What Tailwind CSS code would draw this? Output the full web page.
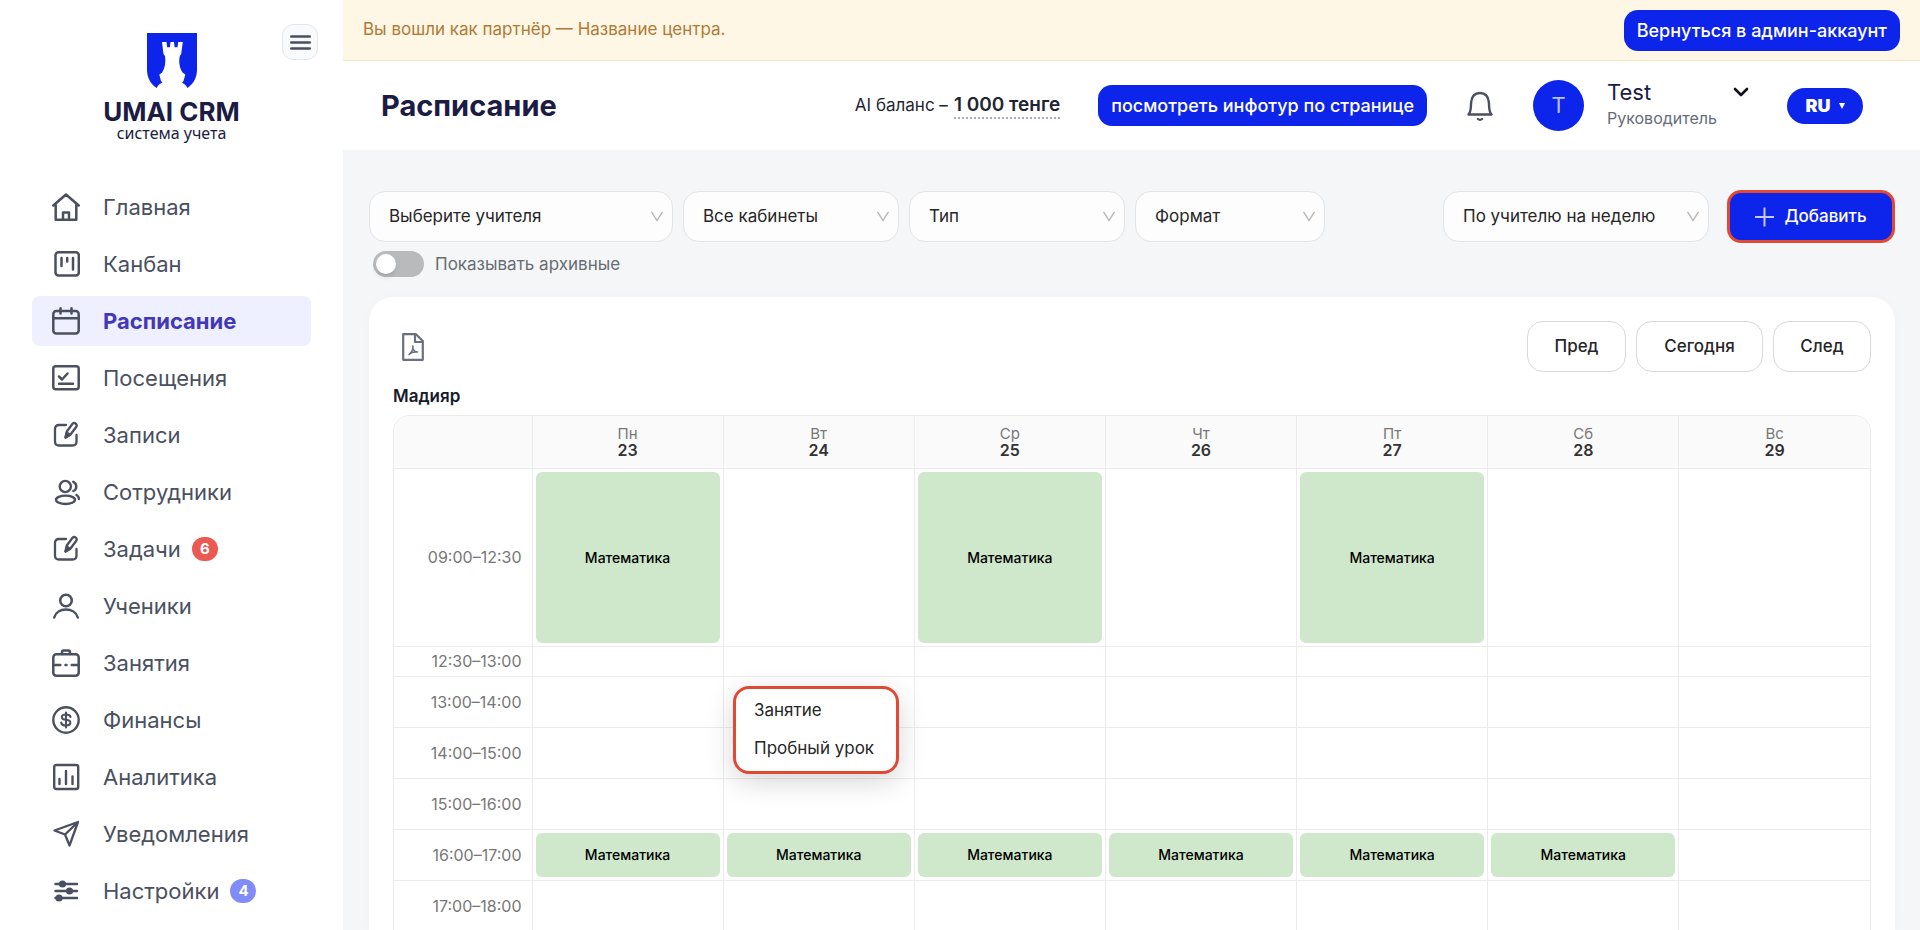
<!DOCTYPE html>
<html lang="ru">
<head>
<meta charset="utf-8">
<title>Расписание — UMAI CRM</title>
<script src="https://cdn.jsdelivr.net/npm/@tailwindcss/browser@4"></script>
</head>
<body class="font-['Inter',sans-serif] bg-[#f4f6f8] text-[#262626] h-screen overflow-hidden">
<div class="flex h-full">

<!-- Sidebar -->
<aside class="relative w-[343px] shrink-0 bg-white">
  <button type="button" aria-label="Меню" class="absolute top-6 right-[25px] size-9 rounded-[11px] border border-[#e5e7eb] bg-[#f8fafc] flex items-center justify-center text-[#4a5060]">
    <svg class="w-[21px] h-[17px]" viewBox="0 0 21 17" fill="none" stroke="currentColor" stroke-width="2.400" stroke-linecap="round"><path d="M1.200 2.500h18.600M1.200 8.500h18.600M1.200 14.500h18.600"/></svg>
  </button>
  <div class="pt-[33px] flex flex-col items-center text-[#1b1b44]">
    <svg class="w-[50px] h-[55px]" viewBox="0 0 50 55" aria-hidden="true"><path fill="#0d24ea" d="M0 0H50V37C50 44 46.500 51 40.500 55L38.500 52 35 49.500 36.500 48 38.300 41.500 35.800 39.800C32.500 35 31.500 29 32.800 23L34.200 21 35.800 9H31.200L30.500 14.200H27.600L27 9H23.500L22.900 14.200H20.200L19.500 9H15L16.500 21 18 23C19 29 18 35 15 39.800L12.300 41.500 14 48 15.500 49.500 12 51.500 9.500 55C3.500 51 0 44 0 37Z"/></svg>
    <div class="mt-[11px] font-bold text-[26px] leading-[26px]">UMAI CRM</div>
    <div class="font-['Noto_Sans',sans-serif] text-[16px] leading-4">система учета</div>
  </div>
  <nav class="mt-[41px] px-8 flex flex-col gap-[7px] text-[22px] text-[#4a5060]">
    <a href="#" class="h-[50px] flex items-center gap-[23px] pl-5 rounded-lg">
      <svg class="size-7" viewBox="0 0 28 28" fill="none" stroke="currentColor" stroke-width="2.500" stroke-linecap="round" stroke-linejoin="round"><path d="M1.300 12.500 14 1.500 26.700 12.500M3.700 10.800V26.700H24.300V10.800M11 26.500V19.500H17V26.500"/></svg>Главная</a>
    <a href="#" class="h-[50px] flex items-center gap-[23px] pl-5 rounded-lg">
      <svg class="size-7" viewBox="0 0 28 28" fill="none" stroke="currentColor" stroke-width="2.500" stroke-linecap="round" stroke-linejoin="round"><rect x="3.500" y="2.200" width="23.300" height="23.300" rx="3"/><path d="M9.500 8v8M15.200 8v3.500M21 8v11.500"/></svg>Канбан</a>
    <a href="#" aria-current="page" class="h-[50px] flex items-center gap-[23px] pl-5 rounded-lg bg-[#eeefff]">
      <svg class="size-7" viewBox="0 0 28 28" fill="none" stroke="currentColor" stroke-width="2.500" stroke-linecap="round" stroke-linejoin="round"><rect x="1.300" y="4" width="25.400" height="22.500" rx="3"/><path d="M1.300 11.200H26.700M8.500 1.300V6.500M19.500 1.300V6.500"/></svg><span class="font-bold text-[#4338b8]">Расписание</span></a>
    <a href="#" class="h-[50px] flex items-center gap-[23px] pl-5 rounded-lg">
      <svg class="size-7" viewBox="0 0 28 28" fill="none" stroke="currentColor" stroke-width="2.500" stroke-linecap="round" stroke-linejoin="round"><rect x="1.300" y="2.200" width="25.400" height="23" rx="2.500"/><path d="M7 12.500 10 15.500 15.500 9.500M7 19.800H21"/></svg>Посещения</a>
    <a href="#" class="h-[50px] flex items-center gap-[23px] pl-5 rounded-lg">
      <svg class="size-7" viewBox="0 0 28 28" fill="none" stroke="currentColor" stroke-width="2.300" stroke-linecap="round" stroke-linejoin="round"><path d="M14 4H7Q3 4 3 8V20.500Q3 24.500 7 24.500H20.500Q24.500 24.500 24.500 20.500V14"/><path d="M13.500 16.500 14.800 10.500 20.500 2.800Q22 1.300 23.800 2.600 25.300 4 24.300 5.800L18.500 13.500Z"/><path fill="currentColor" d="M13.500 16.500 14.800 11.500 18 14Z"/></svg>Записи</a>
    <a href="#" class="h-[50px] flex items-center gap-[23px] pl-5 rounded-lg">
      <svg class="size-7" viewBox="0 0 28 28" fill="none" stroke="currentColor" stroke-width="2.400" stroke-linecap="round"><circle cx="13.300" cy="8.500" r="5.600"/><ellipse cx="13.500" cy="21.800" rx="9.500" ry="4.200"/><path d="M21.300 3.800C25.300 5.500 25.300 11.500 21.300 13M24.500 17C26 17.800 27 19.300 26.800 21"/></svg>Сотрудники</a>
    <a href="#" class="h-[50px] flex items-center gap-[23px] pl-5 rounded-lg">
      <svg class="size-7" viewBox="0 0 28 28" fill="none" stroke="currentColor" stroke-width="2.300" stroke-linecap="round" stroke-linejoin="round"><path d="M14 4H7Q3 4 3 8V20.500Q3 24.500 7 24.500H20.500Q24.500 24.500 24.500 20.500V14"/><path d="M13.500 16.500 14.800 10.500 20.500 2.800Q22 1.300 23.800 2.600 25.300 4 24.300 5.800L18.500 13.500Z"/><path fill="currentColor" d="M13.500 16.500 14.800 11.500 18 14Z"/></svg><span class="flex items-center gap-[11px]">Задачи<span class="h-6 min-w-[26px] rounded-full bg-[#eb5a52] text-white text-[15px] font-bold flex items-center justify-center">6</span></span></a>
    <a href="#" class="h-[50px] flex items-center gap-[23px] pl-5 rounded-lg">
      <svg class="size-7" viewBox="0 0 28 28" fill="none" stroke="currentColor" stroke-width="2.500" stroke-linecap="round"><circle cx="14" cy="8.500" r="5.800"/><path d="M2.200 25.500C5 14.800 23 14.800 25.800 25.500"/></svg>Ученики</a>
    <a href="#" class="h-[50px] flex items-center gap-[23px] pl-5 rounded-lg">
      <svg class="size-7" viewBox="0 0 28 28" fill="none" stroke="currentColor" stroke-width="2.500" stroke-linecap="round" stroke-linejoin="round"><rect x="1.300" y="5.200" width="25.400" height="21.500" rx="3"/><path d="M10 5V3.200Q10 1.500 11.700 1.500H16.300Q18 1.500 18 3.200V5M1.300 16H8.300M19.700 16H26.700M13.500 16H14.500"/></svg>Занятия</a>
    <a href="#" class="h-[50px] flex items-center gap-[23px] pl-5 rounded-lg">
      <svg class="size-7" viewBox="0 0 28 28" fill="none" stroke="currentColor" stroke-width="2.400" stroke-linecap="round"><circle cx="14" cy="14" r="12.700"/><path stroke-width="2.100" d="M14 6.500V21.500M18.500 11C18 9 16.500 8.500 14 8.500 8.500 8.500 8.500 13.200 14 13.800 20 14.500 19.500 19.500 14 19.500 11 19.500 9.500 18.500 9.200 16.500"/></svg>Финансы</a>
    <a href="#" class="h-[50px] flex items-center gap-[23px] pl-5 rounded-lg">
      <svg class="size-7" viewBox="0 0 28 28" fill="none" stroke="currentColor" stroke-width="2.400" stroke-linecap="round" stroke-linejoin="round"><rect x="2.200" y="2" width="24" height="24" rx="2"/><path d="M7.500 16V21M14 8V21M20.500 13.500V21"/></svg>Аналитика</a>
    <a href="#" class="h-[50px] flex items-center gap-[23px] pl-5 rounded-lg">
      <svg class="size-7" viewBox="0 0 28 28" fill="none" stroke="currentColor" stroke-width="2.300" stroke-linecap="round" stroke-linejoin="round"><path d="M2.500 10.500 26 2 17.500 25.500 13 14.500ZM13 14.500 26 2"/></svg>Уведомления</a>
    <a href="#" class="h-[50px] flex items-center gap-[23px] pl-5 rounded-lg">
      <svg class="size-7" viewBox="0 0 28 28" fill="none" stroke="currentColor" stroke-width="2.500" stroke-linecap="round"><path d="M3.500 7H25M3.500 14H25M3.500 21H25"/><g fill="currentColor" stroke="none"><circle cx="10.500" cy="7" r="3.600"/><circle cx="17.500" cy="14" r="3.600"/><circle cx="7" cy="21" r="3.600"/></g></svg><span class="flex items-center gap-[11px]">Настройки<span class="h-6 min-w-[26px] rounded-full bg-[#818cf8] text-white text-[15px] font-bold flex items-center justify-center">4</span></span></a>
  </nav>
</aside>

<div class="flex-1 min-w-0 flex flex-col">
  <!-- Partner notice -->
  <div class="h-[61px] shrink-0 bg-[#fff7e6] border-b border-[#fbe3c0] flex items-center justify-between px-5">
    <p class="text-[17px] text-[#b07a35]">Вы вошли как партнёр — Название центра.</p>
    <button type="button" class="h-[41px] px-[13px] rounded-[14px] bg-[#0d24ea] text-white text-[18px] font-medium whitespace-nowrap">Вернуться в админ-аккаунт</button>
  </div>

  <!-- Header -->
  <header class="h-[89px] shrink-0 bg-white flex items-center pl-[38px] pr-[57px]">
    <h1 class="font-bold text-[29px] text-[#1b1b44]">Расписание</h1>
    <div class="ml-auto flex items-center whitespace-nowrap">
      <p class="text-[17px] text-[#1f2433] flex items-center gap-[6px]">AI баланс – <span class="text-[19px] leading-6 font-semibold border-b-2 border-dotted border-[#a9adba]">1 000 тенге</span></p>
      <button type="button" class="ml-[38px] h-[41px] px-[13px] rounded-[14px] bg-[#0d24ea] text-white text-[18px] font-medium">посмотреть инфотур по странице</button>
      <button type="button" aria-label="Уведомления" class="ml-10 text-[#4a5060]">
        <svg class="w-[26px] h-[30px]" viewBox="0 0 26 30" fill="none" stroke="currentColor" stroke-width="2.400" stroke-linecap="round" stroke-linejoin="round"><path d="M1.500 23.500C4.500 20 3.500 17 4.200 11 4.800 5.500 7.500 2 13 2S21.200 5.500 21.800 11C22.500 17 21.500 20 24.500 23.500ZM11 28C12 29 14 29 15 28"/></svg>
      </button>
      <span class="ml-10 size-[51px] rounded-full bg-[#0d24ea] text-[#b9c0ff] text-[22px] flex items-center justify-center">T</span>
      <button type="button" class="ml-[23px] pb-[3px] flex items-start text-left">
        <span class="w-[122px] flex flex-col"><span class="text-[22px] leading-7 text-[#1b1b44]">Test</span><span class="text-[16px] leading-6 text-[#676c7b]">Руководитель</span></span>
        <svg class="ml-1 mt-[9px] w-4 h-[10px] text-[#0f1020]" viewBox="0 0 16 10" fill="none" stroke="currentColor" stroke-width="2.600" stroke-linecap="round" stroke-linejoin="round"><path d="M2 2 8 8 14 2"/></svg>
      </button>
      <button type="button" class="ml-[38px] h-9 w-[76px] rounded-full bg-[#0d24ea] text-white text-[18px] font-black flex items-center justify-center gap-2">RU
        <svg class="w-[6px] h-[6px]" viewBox="0 0 6 6" fill="currentColor"><path d="M0 0H6L3 6Z"/></svg></button>
    </div>
  </header>

  <main class="flex-1 min-h-0 pl-[26px] pr-[25px] pt-10 flex flex-col">
    <!-- Filters -->
    <div class="flex items-center text-[17px]">
      <div class="relative w-[304px]"><select aria-label="Учитель" class="appearance-none w-full h-[51px] pl-[19px] pr-8 rounded-2xl border border-[#e2e4e7] bg-[#fdfdfd]"><option>Выберите учителя</option></select>
        <svg class="absolute right-[10px] top-5 w-3 h-[11px] text-[#b5b5b5] pointer-events-none" viewBox="0 0 12 11" fill="none" stroke="currentColor" stroke-width="1.400"><path d="M.5.800 6 9.500 11.500.8"/></svg></div>
      <div class="relative w-[216px] ml-[10px]"><select aria-label="Кабинет" class="appearance-none w-full h-[51px] pl-[19px] pr-8 rounded-2xl border border-[#e2e4e7] bg-[#fdfdfd]"><option>Все кабинеты</option></select>
        <svg class="absolute right-[10px] top-5 w-3 h-[11px] text-[#b5b5b5] pointer-events-none" viewBox="0 0 12 11" fill="none" stroke="currentColor" stroke-width="1.400"><path d="M.5.800 6 9.500 11.500.8"/></svg></div>
      <div class="relative w-[216px] ml-[10px]"><select aria-label="Тип" class="appearance-none w-full h-[51px] pl-[19px] pr-8 rounded-2xl border border-[#e2e4e7] bg-[#fdfdfd]"><option>Тип</option></select>
        <svg class="absolute right-[10px] top-5 w-3 h-[11px] text-[#b5b5b5] pointer-events-none" viewBox="0 0 12 11" fill="none" stroke="currentColor" stroke-width="1.400"><path d="M.5.800 6 9.500 11.500.8"/></svg></div>
      <div class="relative w-[190px] ml-[10px]"><select aria-label="Формат" class="appearance-none w-full h-[51px] pl-[19px] pr-8 rounded-2xl border border-[#e2e4e7] bg-[#fdfdfd]"><option>Формат</option></select>
        <svg class="absolute right-[10px] top-5 w-3 h-[11px] text-[#b5b5b5] pointer-events-none" viewBox="0 0 12 11" fill="none" stroke="currentColor" stroke-width="1.400"><path d="M.5.800 6 9.500 11.500.8"/></svg></div>
      <div class="relative w-[266px] ml-auto"><select aria-label="Вид" class="appearance-none w-full h-[51px] pl-[19px] pr-8 rounded-2xl border border-[#e2e4e7] bg-[#fdfdfd]"><option>По учителю на неделю</option></select>
        <svg class="absolute right-[10px] top-5 w-3 h-[11px] text-[#b5b5b5] pointer-events-none" viewBox="0 0 12 11" fill="none" stroke="currentColor" stroke-width="1.400"><path d="M.5.800 6 9.500 11.500.8"/></svg></div>
      <button type="button" class="ml-[18px] h-[53px] w-[168px] rounded-[14px] border-3 border-[#e04a35] bg-[#0d24ea] text-white font-medium flex items-center justify-center gap-[10px]">
        <svg class="w-[19px] h-[20px]" viewBox="0 0 19 20" stroke="#c3caff" stroke-width="2"><path d="M9.500.500V19.500M0 10H19"/></svg>Добавить</button>
    </div>

    <label class="mt-2 ml-1 self-start flex items-center gap-[11px] text-[17px] leading-[26px] text-[#676c73]">
      <input type="checkbox" role="switch" class="appearance-none w-[51px] h-[26px] rounded-full bg-[#b9babb] before:content-[''] before:block before:size-5 before:m-[3px] before:rounded-full before:bg-white before:shadow-md">
      Показывать архивные</label>

    <!-- Schedule card -->
    <section class="mt-5 flex-1 min-h-0 rounded-t-3xl bg-white px-6 pt-6 shadow-[0_0_12px_rgba(0,0,0,0.02)]">
      <div class="flex items-center justify-between">
        <button type="button" aria-label="PDF" class="ml-[9px] text-[#6b7080]">
          <svg class="w-[22px] h-7" viewBox="0 0 22 28" fill="none" stroke="currentColor" stroke-width="2.200" stroke-linejoin="round"><path d="M1.200 1.200H14L20.800 8V26.800H1.200ZM13 1.500V9H20.500"/><path stroke-width="1.600" stroke-linecap="round" d="M10.800 13C11.500 16 11 18 7 21.500M7 21.500C9 19.500 12 18.500 15.500 19M11 16C12 18 13.500 19 15.500 19"/></svg></button>
        <div class="flex gap-[10px] text-[17px] font-medium">
          <button type="button" class="h-[51px] w-[99px] rounded-2xl border border-[#d9d9d9] bg-white">Пред</button>
          <button type="button" class="h-[51px] w-[127px] rounded-2xl border border-[#d9d9d9] bg-white">Сегодня</button>
          <button type="button" class="h-[51px] w-[98px] rounded-2xl border border-[#d9d9d9] bg-white">След</button>
        </div>
      </div>
      <h2 class="mt-3 text-[17px] leading-6 font-semibold text-[#171a2b]">Мадияр</h2>
      <div class="relative mt-[7px] border border-[#ececec] rounded-t-2xl overflow-hidden">
        <table class="w-full table-fixed border-collapse text-[15px]">
          <thead class="bg-[#fafafa]">
            <tr class="h-[52px] leading-4 *:border-l *:border-b *:border-[#ececec] *:font-normal *:text-[#777777]">
              <th class="w-[138px] border-l-0!"></th>
              <th>Пн<span class="block font-semibold text-[16px] text-[#333333]">23</span></th>
              <th>Вт<span class="block font-semibold text-[16px] text-[#333333]">24</span></th>
              <th>Ср<span class="block font-semibold text-[16px] text-[#333333]">25</span></th>
              <th>Чт<span class="block font-semibold text-[16px] text-[#333333]">26</span></th>
              <th>Пт<span class="block font-semibold text-[16px] text-[#333333]">27</span></th>
              <th>Сб<span class="block font-semibold text-[16px] text-[#333333]">28</span></th>
              <th>Вс<span class="block font-semibold text-[16px] text-[#333333]">29</span></th>
            </tr>
          </thead>
          <tbody class="*:*:border-l *:*:border-b *:*:border-[#ececec] *:*:p-[3px] *:*:first:border-l-0 *:*:first:text-right *:*:first:pr-[10px] *:*:first:text-[16px] *:*:first:text-[#777777]">
            <tr class="h-[178px]"><td>09:00–12:30</td>
              <td><div class="h-[171px] rounded-md bg-[#cfe8cb] text-black text-[14px] font-medium flex items-center justify-center">Математика</div></td><td></td>
              <td><div class="h-[171px] rounded-md bg-[#cfe8cb] text-black text-[14px] font-medium flex items-center justify-center">Математика</div></td><td></td>
              <td><div class="h-[171px] rounded-md bg-[#cfe8cb] text-black text-[14px] font-medium flex items-center justify-center">Математика</div></td><td></td><td></td></tr>
            <tr class="h-[30px] leading-[22px]"><td>12:30–13:00</td><td></td><td></td><td></td><td></td><td></td><td></td><td></td></tr>
            <tr class="h-[51px]"><td>13:00–14:00</td><td></td><td></td><td></td><td></td><td></td><td></td><td></td></tr>
            <tr class="h-[51px]"><td>14:00–15:00</td><td></td><td></td><td></td><td></td><td></td><td></td><td></td></tr>
            <tr class="h-[51px]"><td>15:00–16:00</td><td></td><td></td><td></td><td></td><td></td><td></td><td></td></tr>
            <tr class="h-[51px]"><td>16:00–17:00</td>
              <td><div class="h-[44px] rounded-md bg-[#cfe8cb] text-black text-[14px] font-medium flex items-center justify-center">Математика</div></td>
              <td><div class="h-[44px] rounded-md bg-[#cfe8cb] text-black text-[14px] font-medium flex items-center justify-center">Математика</div></td>
              <td><div class="h-[44px] rounded-md bg-[#cfe8cb] text-black text-[14px] font-medium flex items-center justify-center">Математика</div></td>
              <td><div class="h-[44px] rounded-md bg-[#cfe8cb] text-black text-[14px] font-medium flex items-center justify-center">Математика</div></td>
              <td><div class="h-[44px] rounded-md bg-[#cfe8cb] text-black text-[14px] font-medium flex items-center justify-center">Математика</div></td>
              <td><div class="h-[44px] rounded-md bg-[#cfe8cb] text-black text-[14px] font-medium flex items-center justify-center">Математика</div></td><td></td></tr>
            <tr class="h-[51px]"><td>17:00–18:00</td><td></td><td></td><td></td><td></td><td></td><td></td><td></td></tr>
          </tbody>
        </table>
        <!-- Add menu -->
        <div role="menu" class="absolute left-[339px] top-[270px] w-[166px] h-[88px] py-[3px] rounded-2xl border-3 border-[#e04a35] bg-white shadow-[0_8px_28px_rgba(0,0,0,0.16)] flex flex-col text-[17px]">
          <button type="button" role="menuitem" class="flex-1 pl-[18px] text-left">Занятие</button>
          <button type="button" role="menuitem" class="flex-1 pl-[18px] text-left whitespace-nowrap">Пробный урок</button>
        </div>
      </div>
    </section>
  </main>
</div>
</div>
</body>
</html>
